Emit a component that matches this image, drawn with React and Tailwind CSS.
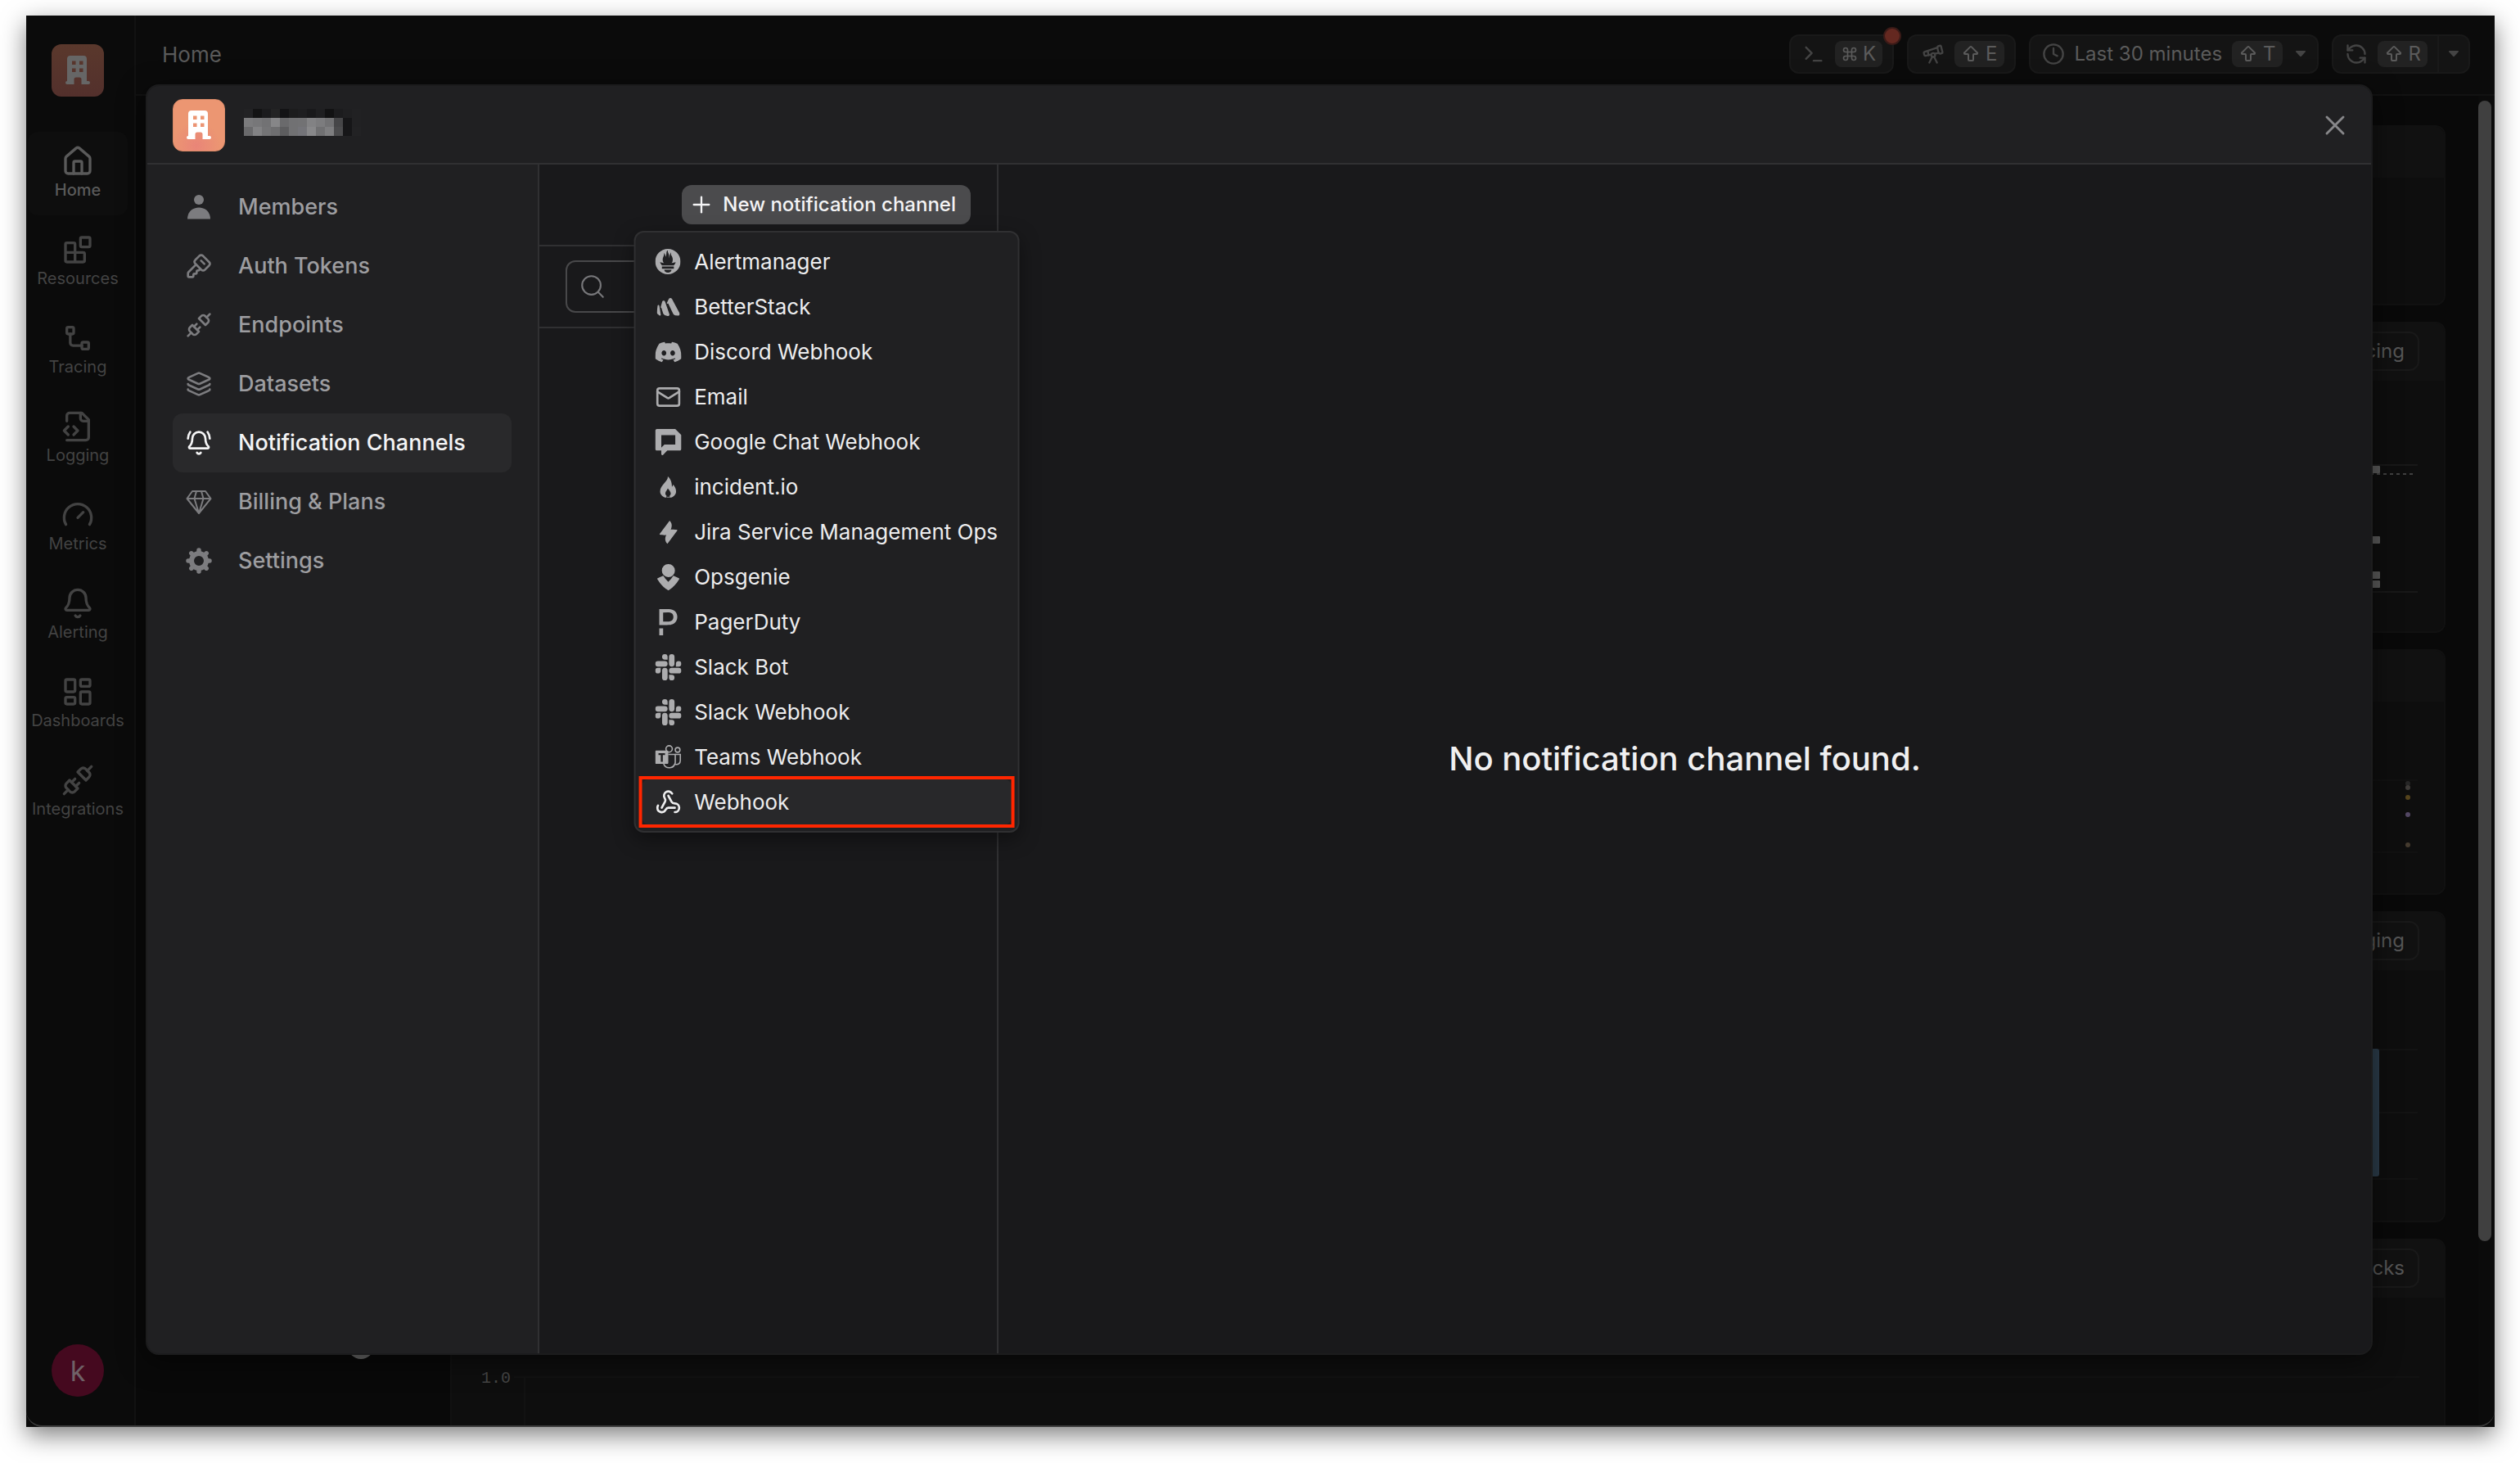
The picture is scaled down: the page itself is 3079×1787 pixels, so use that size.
import {
  ArrowBigUp, Bell, BellRing, Clock, Command, FileCode2, Gauge, House, KeySquare, Layers,
  LayoutDashboard, Mail, Plus, RefreshCcw, Search, Telescope, Terminal, Unplug, Webhook, X,
} from "lucide-react";
import {
  SiPrometheus, SiBetterstack, SiDiscord, SiGooglechat, SiOpsgenie, SiPagerduty, SiSlack,
} from "react-icons/si";

function Stroke({ size = 40, children, width = 2 }) {
  return (
    <svg width={size} height={size} viewBox="0 0 24 24" fill="none" stroke="currentColor" strokeWidth={width} strokeLinecap="round" strokeLinejoin="round">
      {children}
    </svg>
  );
}

const BlocksIcon = ({ size }) => (
  <Stroke size={size}>
    <rect width="7" height="7" x="14" y="3" rx="1" />
    <path d="M10 21V8a1 1 0 0 0-1-1H4a1 1 0 0 0-1 1v12a1 1 0 0 0 1 1h12a1 1 0 0 0 1-1v-5a1 1 0 0 0-1-1H3" />
  </Stroke>
);

const TraceIcon = ({ size }) => (
  <Stroke size={size}>
    <rect width="5" height="5" x="4" y="4" rx="1" />
    <rect width="5" height="5" x="15" y="15" rx="1" />
    <path d="M6.5 9v6.5a2 2 0 0 0 2 2H15" />
  </Stroke>
);

const FileCodeIcon = ({ size }) => (
  <Stroke size={size}>
    <path d="M4 22h14a2 2 0 0 0 2-2V7l-5-5H6a2 2 0 0 0-2 2v4" />
    <path d="M14 2v4a2 2 0 0 0 2 2h4" />
    <path d="m5 12-3 3 3 3" />
    <path d="m9 18 3-3-3-3" />
  </Stroke>
);

const PersonIcon = ({ size }) => (
  <svg width={size} height={size} viewBox="0 0 32 32" fill="currentColor">
    <circle cx="16" cy="7" r="6" />
    <path d="M2 30.5C2 22 8 16.5 16 16.5S30 22 30 30.5Z" />
  </svg>
);

const GemIcon = ({ size }) => (
  <svg width={size} height={size} viewBox="0 0 32 32" fill="none" stroke="currentColor" strokeWidth="2" strokeLinejoin="round">
    <path d="M8 3h16l6.500 9L16 30 1.500 12ZM1.500 12h29M16 30 10.500 12 13 3M16 30l5.500-18L19 3" />
  </svg>
);

const GearIcon = ({ size }) => (
  <svg width={size} height={size} viewBox="0 0 32 32">
    <g fill="none" stroke="currentColor">
      <circle cx="16" cy="16" r="9" strokeWidth="6" />
      <path d="M16 5V3M16 27v2M5 16H3M27 16h2M8.200 8.200 6.800 6.800M23.800 23.800l1.400 1.400M23.800 8.200l1.400-1.400M8.200 23.800l-1.400 1.400" strokeWidth="5.500" strokeLinecap="round" />
    </g>
  </svg>
);

const IncidentIcon = ({ size }) => (
  <svg width={size} height={size} viewBox="0 0 32 32" fill="currentColor">
    <path d="M15.4 3c.3 3.2-2 5.300-4.400 8.300C8.200 14.600 6 17.200 6 21.200c0 3.400 2.400 6.300 6.200 7.600h1.600v-2.300c-1-.7-1.400-1.700-1.400-2.900 0-2.200 2-3.600 3-6.100.6 1.200 3.600 3.700 3.600 6.300 0 1.100-.5 2-1.300 2.700v2.300h1.800c3.700-1.300 6-4.200 6-7.600 0-3.500-1.600-6.500-3.900-8.500.1 1.300-.2 2.200-1.200 2.800C20.600 10.500 18.600 5.600 15.400 3Z" />
    <path d="M14.500 29h3l.3-1.300h-3.600Z" opacity="0.600" />
  </svg>
);

const BoltIcon = ({ size }) => (
  <svg width={size} height={size} viewBox="0 0 32 32" fill="currentColor">
    <path d="M17.600 2c3.200 2.900 3.300 7.500 1.200 11.200L14.600 19.500c-2.700.3-6.600.2-8.900-.4-.4-.1-.5-.5-.3-.9Z" />
    <path d="M14.900 30.200c-3.200-2.900-3.300-7.500-1.200-11.200l4.300-6.200c2.700-.3 6.400-.2 8.700.4.4.1.5.5.3.9Z" />
  </svg>
);

const TeamsIcon = ({ size }) => (
  <svg width={size} height={size} viewBox="0 0 32 32" fill="none" stroke="currentColor" strokeWidth="1.600">
    <circle cx="17" cy="5.800" r="3.900" />
    <circle cx="27.400" cy="7" r="2.900" />
    <path d="M16 12.500h8.500v10a7.400 7.400 0 0 1-14.200 1.500" />
    <path d="M24.500 12.500h6.200v7.500c0 3.300-2.700 5.500-6.200 4.500" />
    <path fill="currentColor" stroke="none" fillRule="evenodd" d="M1.300 7.800h13.400c.7 0 1.300.6 1.300 1.300v13.600c0 .7-.6 1.300-1.300 1.300H1.300C.6 24 0 23.400 0 22.700V9.100c0-.7.600-1.300 1.300-1.300ZM4 10.900v2.300h2.800v8.200h2.500v-8.200H12v-2.300Z" />
  </svg>
);

const Building = () => (
  <svg width="30" height="36" viewBox="0 0 30 36" fill="currentColor" fillRule="evenodd">
    <path d="M6 0h16a4 4 0 0 1 4 4v27h2a2 2 0 0 1 2 2v0a2 2 0 0 1-2 2h-8.500v-6a2.500 2.500 0 0 0-2.500-2.500h-4A2.500 2.500 0 0 0 10.500 29v6H2a2 2 0 0 1-2-2v0a2 2 0 0 1 2-2V4a4 4 0 0 1 4-4ZM8 6.500v4.500h4.500V6.500Zm9 0v4.500h4.500V6.500ZM8 15.500V20h4.500v-4.500Zm9 0V20h4.500v-4.500Z" />
  </svg>
);

const Caret = () => (
  <svg width="12" height="8" viewBox="0 0 12 8" fill="currentColor" className="text-[#444444]">
    <path d="M.8 0h10.400c.7 0 1 .8.600 1.300L6.900 6.800c-.5.500-1.300.5-1.800 0L.2 1.300C-.2.800.1 0 .8 0Z" />
  </svg>
);

function Keys({ icon: Icon, size, letter }) {
  return (
    <kbd className="flex h-8 items-center gap-1.5 rounded-lg bg-[#222222] px-2 font-['Inter',sans-serif] text-[24px] leading-8 text-[#5b5b5b]">
      <Icon size={size} />
      {letter}
    </kbd>
  );
}

const topButton = "flex h-12 items-center rounded-xl border-2 border-[#191919] bg-[#141414] text-[#444444]";

const mainNav = [
  { label: "Home", icon: House, active: true },
  { label: "Resources", icon: BlocksIcon },
  { label: "Tracing", icon: TraceIcon },
  { label: "Logging", icon: FileCodeIcon },
  { label: "Metrics", icon: Gauge },
  { label: "Alerting", icon: Bell },
  { label: "Dashboards", icon: LayoutDashboard },
  { label: "Integrations", icon: Unplug },
];

const settingsNav = [
  { label: "Members", icon: PersonIcon },
  { label: "Auth Tokens", icon: KeySquare },
  { label: "Endpoints", icon: Unplug },
  { label: "Datasets", icon: Layers },
  { label: "Notification Channels", icon: BellRing, active: true },
  { label: "Billing & Plans", icon: GemIcon },
  { label: "Settings", icon: GearIcon },
];

const channels = [
  { label: "Alertmanager", icon: SiPrometheus, size: 31 },
  { label: "BetterStack", icon: SiBetterstack, size: 28 },
  { label: "Discord Webhook", icon: SiDiscord, size: 32 },
  { label: "Email", icon: Mail, size: 32 },
  { label: "Google Chat Webhook", icon: SiGooglechat, size: 32 },
  { label: "incident.io", icon: IncidentIcon, size: 32 },
  { label: "Jira Service Management Ops", icon: BoltIcon, size: 32 },
  { label: "Opsgenie", icon: SiOpsgenie, size: 32 },
  { label: "PagerDuty", icon: SiPagerduty, size: 32 },
  { label: "Slack Bot", icon: SiSlack, size: 32 },
  { label: "Slack Webhook", icon: SiSlack, size: 32 },
  { label: "Teams Webhook", icon: TeamsIcon, size: 32 },
  { label: "Webhook", icon: Webhook, size: 32, selected: true },
];

function MainSidebar() {
  return (
    <aside className="flex w-[134px] shrink-0 flex-col items-center border-r-2 border-[#121212] bg-[#0b0b0b] pt-[35px] pr-2 pb-[37px] pl-0.5">
      <div className="flex size-16 items-center justify-center rounded-xl bg-linear-to-b from-[#5a382c] to-[#53302c] text-[#666666]">
        <Building />
      </div>
      <nav className="mt-[43px] flex w-full flex-col gap-1.5">
        {mainNav.map(({ label, icon: Icon, active }) => (
          <a
            key={label}
            href="#"
            className={`flex flex-col items-center rounded-xl py-4 text-[20px] leading-[30px] ${active ? "bg-[#0e0e0e] font-medium text-[#5a5a5a]" : "text-[#434343]"}`}
          >
            <Icon size={40} />
            {label}
          </a>
        ))}
      </nav>
      <button type="button" className="mt-auto size-16 rounded-full bg-[#45091f] text-[34px] text-[#6f6167]">
        k
      </button>
    </aside>
  );
}

function TopBar() {
  return (
    <header className="flex h-[98px] shrink-0 items-center gap-4 border-b-2 border-[#121212] bg-[#0b0b0b] pr-[30px] pb-0.5 pl-8">
      <h1 className="mr-auto text-[26px] text-[#5a5a5a]">Home</h1>
      <button type="button" aria-label="Command palette" className={`relative gap-3 pr-3 pl-3.5 ${topButton}`}>
        <Terminal size={28} />
        <Keys icon={Command} size={20} letter="K" />
        <span className="absolute -top-[11px] -right-[11px] size-[22px] rounded-full border-2 border-[#3a1b18] bg-[#642820]" />
      </button>
      <button type="button" aria-label="Explore" className={`gap-3 pr-3 pl-4 ${topButton}`}>
        <Telescope size={28} />
        <Keys icon={ArrowBigUp} size={24} letter="E" />
      </button>
      <button type="button" className={`gap-3 px-3.5 ${topButton}`}>
        <Clock size={28} />
        <span className="text-[24px] text-[#5b5b5b]">Last 30 minutes</span>
        <Keys icon={ArrowBigUp} size={24} letter="T" />
        <span className="ml-1">
          <Caret />
        </span>
      </button>
      <div className="flex">
        <button type="button" aria-label="Refresh" className={`gap-3 rounded-r-none pr-3 pl-3.5 ${topButton}`}>
          <RefreshCcw size={28} />
          <Keys icon={ArrowBigUp} size={24} letter="R" />
        </button>
        <button type="button" aria-label="Refresh interval" className={`rounded-l-none border-l-0 px-3 ${topButton}`}>
          <Caret />
        </button>
      </div>
    </header>
  );
}

function Card({ action, className, children }) {
  return (
    <section className={`flex flex-col overflow-hidden rounded-xl border-2 border-[#111111] bg-[#0e0e0e] ${className}`}>
      <div className={`flex shrink-0 items-center justify-end bg-[#111111] pr-[30px] ${action ? "h-[70px]" : "h-[62px]"}`}>
        {action && (
          <button type="button" className="mb-0.5 h-12 rounded-xl border-2 border-[#191919] px-4 text-[24px] text-[#555555]">
            {action}
          </button>
        )}
      </div>
      {children}
    </section>
  );
}

function Dashboard() {
  return (
    <main className="flex min-h-0 flex-1 bg-[#090909]">
      <div className="flex w-[384px] shrink-0 flex-col justify-end pb-[83px] pl-[263px]">
        <svg width="24" height="24" viewBox="0 0 24 24" fill="#6a6a6a">
          <circle cx="12" cy="8" r="16" />
        </svg>
      </div>
      <div className="flex min-w-0 flex-1 flex-col gap-5 pt-9 pr-10">
        <Card className="h-[220px] shrink-0" />
        <Card action="Tracing" className="h-[380px] shrink-0">
          <svg width="100" height="306" viewBox="0 0 100 306" className="mr-[30px] self-end">
            <path d="M0 103h98M0 258h98" stroke="#181818" strokeWidth="2" />
            <path d="M40 114h56" stroke="#404040" strokeWidth="2" strokeDasharray="4 4" />
            <g fill="#595959">
              <rect x="30" y="104" width="22" height="9" rx="1" />
              <rect x="30" y="190" width="22" height="9" rx="1" />
              <rect x="30" y="233" width="22" height="9" rx="1" />
              <rect x="30" y="244" width="22" height="9" rx="1" />
            </g>
          </svg>
        </Card>
        <Card className="h-[300px] shrink-0">
          <svg width="100" height="234" viewBox="0 0 100 234" className="mr-[30px] self-end">
            <path d="M0 96h98M0 184h98" stroke="#111111" strokeWidth="2" />
            <circle cx="86" cy="100" r="3" fill="#262626" />
            <circle cx="86" cy="105" r="3" fill="#3d3a38" />
            <circle cx="86" cy="117" r="3" fill="#54431c" />
            <circle cx="86" cy="138" r="3" fill="#524763" />
            <circle cx="86" cy="175" r="3" fill="#443a2e" />
          </svg>
        </Card>
        <Card action="Logging" className="h-[380px] shrink-0">
          <svg width="100" height="306" viewBox="0 0 100 306" className="mr-[30px] self-end">
            <path d="M0 97h98M0 174h98M0 255h98" stroke="#131313" strokeWidth="2" />
            <rect x="20" y="96" width="31" height="156" rx="3" fill="#2b3c4a" />
          </svg>
        </Card>
        <Card action="Checks" className="min-h-0 flex-1 rounded-b-none border-b-0">
          <div className="flex flex-1 pr-[30px] pl-9">
            <span className="pt-[85px] font-['Liberation_Mono',monospace] text-[20px] leading-7 text-[#454545]">1.0</span>
            <div className="mt-[96px] ml-1 flex flex-1 border-t-2 border-[#121212] pl-3">
              <div className="flex-1 border-l-2 border-[#121212]" />
            </div>
          </div>
        </Card>
      </div>
      <div className="w-5 shrink-0 bg-[#0b0b0b] pt-1.5">
        <div className="h-[86%] w-4 rounded-full bg-[#404040]" />
      </div>
    </main>
  );
}

const nameMask = [
  ["#222224", "#131314", "#1b1b1d", "#232324", "#131315", "#1c1c1d", "#1e1e20", "#19191b", "#1f1f21", "#121213", "#1c1c1e", "#1f1f21", "#212123"],
  ["#7b7b7d", "#777779", "#727274", "#868688", "#6a6a6c", "#717173", "#727274", "#828284", "#7c7c7e", "#727274", "#464648", "#161618", "#212123"],
  ["#6a6a6c", "#828284", "#747476", "#6e6e70", "#5d5d5f", "#717173", "#747479", "#88888a", "#707072", "#7e7e80", "#4b4b4d", "#161618", "#222224"],
];

function ModalHeader() {
  return (
    <header className="flex h-24 shrink-0 items-center border-b-2 border-[#303032] bg-[#202022] pt-0.5 pr-6 pl-[31px]">
      <div className="flex size-16 items-center justify-center rounded-xl border border-[#d98a68] bg-[radial-gradient(circle_at_45%_90%,#e98578,#ec9672_45%)] text-white">
        <Building />
      </div>
      <div className="mb-2 ml-[23px]" role="img" aria-label="Organization name hidden">
        {nameMask.map((row, r) => (
          <div key={r} className="flex">
            {row.map((color, c) => (
              <span key={c} className="h-[11px] w-[11px]" style={{ backgroundColor: color }} />
            ))}
          </div>
        ))}
      </div>
      <button type="button" aria-label="Close" className="ml-auto text-[#87878a]">
        <X size={40} strokeWidth={1.75} />
      </button>
    </header>
  );
}

function SettingsSidebar() {
  return (
    <nav className="flex w-[479px] shrink-0 flex-col border-r-2 border-[#303032] bg-[#202022] py-4 pr-8 pl-[31px]">
      {settingsNav.map(({ label, icon: Icon, active }) => (
        <a
          key={label}
          href="#"
          className={`flex h-[72px] items-center gap-8 rounded-xl px-4 text-[27px] font-medium ${active ? "bg-[#29292b] text-[#f4f4f5]" : "text-[#9d9da0]"}`}
        >
          <span className={active ? "" : "text-[#7c7c7f]"}>
            <Icon size={32} />
          </span>
          {label}
        </a>
      ))}
    </nav>
  );
}

function ChannelMenu() {
  return (
    <div role="menu" className="absolute top-full left-1/2 z-10 mt-2 -translate-x-1/2 rounded-xl border-2 border-[#303032] bg-[#202022] p-2 shadow-[0_8px_24px_rgba(0,0,0,0.4)]">
      {channels.map(({ label, icon: Icon, size, selected }) => (
        <button
          key={label}
          type="button"
          role="menuitem"
          className={`relative flex h-[55px] w-full items-center gap-4 rounded-lg px-4 text-[26px] whitespace-nowrap text-[#ededee] ${selected ? "bg-[#28282a]" : ""}`}
        >
          <span className={`flex size-8 items-center justify-center ${selected ? "" : "text-[#acacae]"}`}>
            <Icon size={size} />
          </span>
          {label}
          {selected && <span className="absolute -inset-1 border-4 border-[#ff2600]" />}
        </button>
      ))}
    </div>
  );
}

function ChannelList() {
  return (
    <div className="flex w-[561px] shrink-0 flex-col border-r-2 border-[#303032]">
      <div className="flex h-[100px] items-center justify-end border-b-2 border-[#303032] pr-8">
        <div className="relative">
          <button type="button" aria-haspopup="menu" className="flex h-12 items-center gap-2.5 rounded-xl bg-[#4b4b4d] pr-[18px] pl-2 text-[24px] font-medium text-[#f4f4f5]">
            <Plus size={32} strokeWidth={1.75} />
            New notification channel
          </button>
          <ChannelMenu />
        </div>
      </div>
      <div className="flex h-[100px] items-center border-b-2 border-[#303032] px-8">
        <label className="flex h-16 flex-1 items-center rounded-xl border-2 border-[#48484a] px-3.5 text-[#77777a]">
          <Search size={34} strokeWidth={1.5} />
          <input type="search" aria-label="Search notification channels" className="min-w-0 flex-1 bg-transparent px-3 text-[26px] outline-none" />
        </label>
      </div>
    </div>
  );
}

export default function App() {
  return (
    <div className="h-screen bg-white pt-[19px] pr-[31px] pb-11 pl-8 font-['Inter',sans-serif]">
      <div className="relative flex h-full overflow-hidden bg-black shadow-[0_10px_28px_rgba(0,0,0,0.5)]">
        <MainSidebar />
        <div className="flex min-w-0 flex-1 flex-col">
          <TopBar />
          <Dashboard />
        </div>
        <div className="absolute inset-0 pt-[84px] pr-[149px] pb-[88px] pl-[146px]">
          <div role="dialog" aria-modal="true" aria-label="Organization settings" className="flex h-full flex-col overflow-hidden rounded-2xl border-2 border-[#1c1c1d] bg-[#19191b] shadow-[0_8px_32px_rgba(0,0,0,0.5)]">
            <ModalHeader />
            <div className="flex min-h-0 flex-1">
              <SettingsSidebar />
              <ChannelList />
              <div className="flex flex-1 items-center justify-center">
                <p className="text-[40px] font-medium text-[#f0f0f1]">No notification channel found.</p>
              </div>
            </div>
          </div>
        </div>
        <div className="pointer-events-none absolute inset-0 rounded-b-[20px] border-b-2 border-[#3a3a3a]" />
      </div>
    </div>
  );
}
